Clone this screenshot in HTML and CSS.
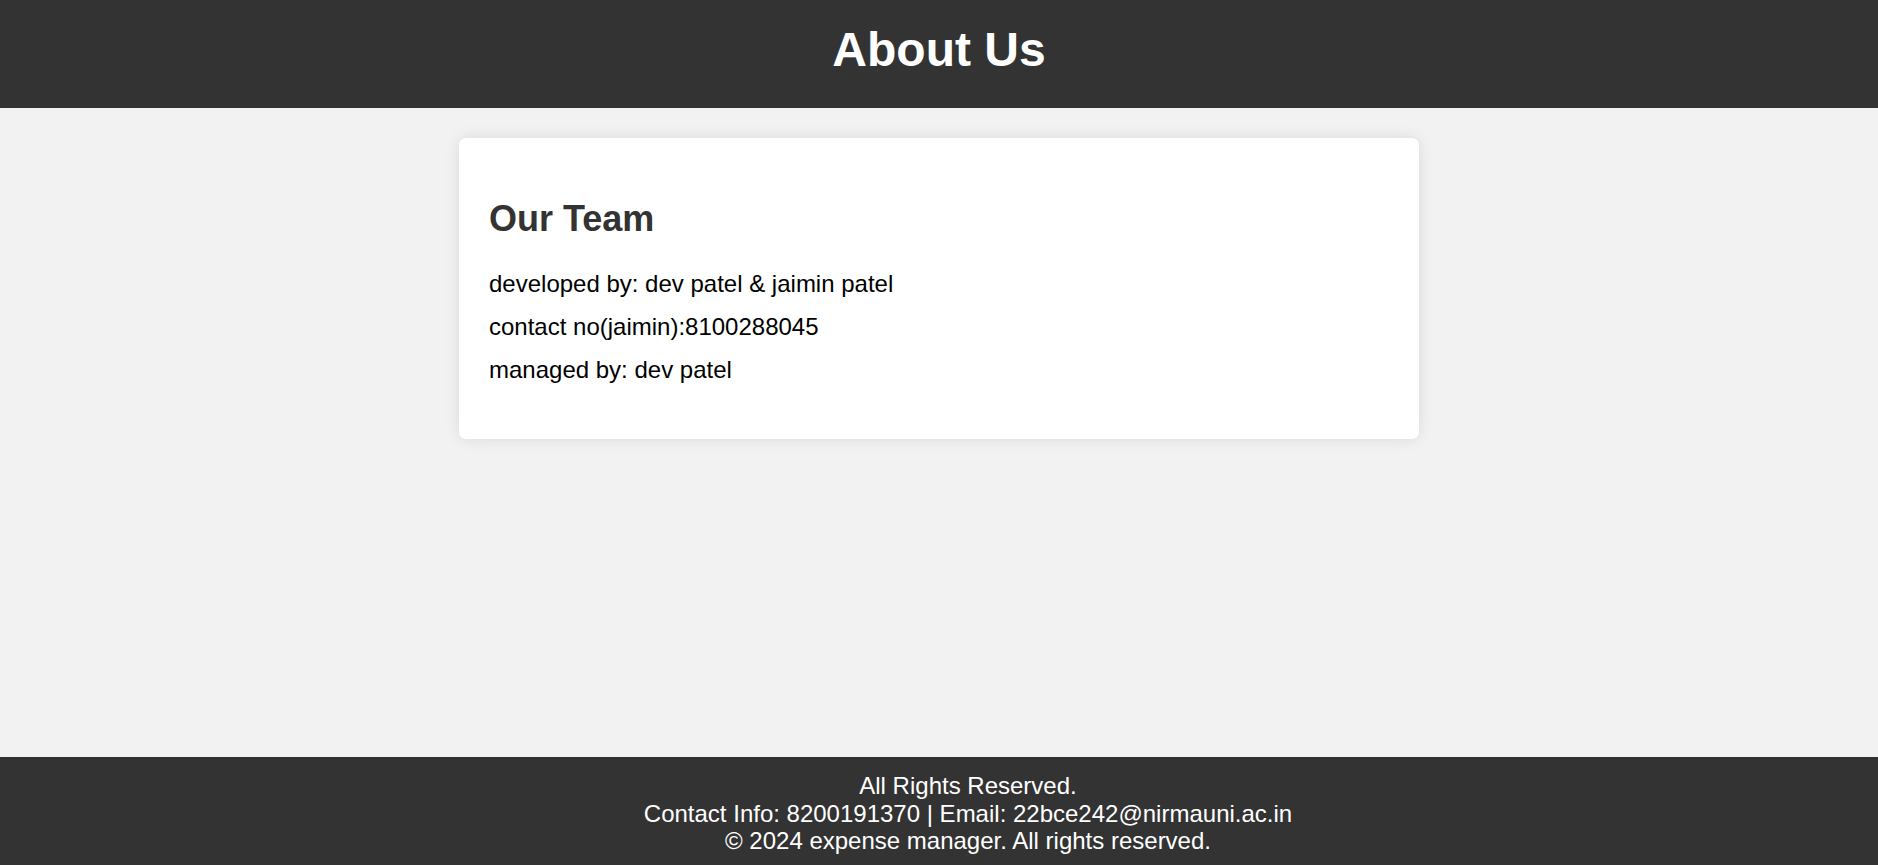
FILE: index.html
```html
<!DOCTYPE html>
<html lang="en">
<head>
<meta charset="UTF-8">
<title>About Us</title>
<link rel="stylesheet" href="styles.css">
</head>
<body>
<header class="site-header">
  <h1 class="site-title">About Us</h1>
</header>
<main class="content">
  <section class="card">
    <h2 class="card-title">Our Team</h2>
    <p class="card-text">developed by: dev patel &amp; jaimin patel</p>
    <p class="card-text">contact no(jaimin):8100288045</p>
    <p class="card-text">managed by: dev patel</p>
  </section>
</main>
<footer class="site-footer">
  <p class="footer-text">All Rights Reserved.<br>Contact Info: 8200191370 | Email: 22bce242@nirmauni.ac.in<br>© 2024 expense manager. All rights reserved.</p>
</footer>
</body>
</html>
```

FILE: styles.css
```css
html, body {
  margin: 0;
  padding: 0;
}

body {
  font-family: "Liberation Sans", Arial, sans-serif;
  background: #f2f2f2;
  min-height: 100vh;
  display: flex;
  flex-direction: column;
}

.site-header {
  background: #333333;
  color: #ffffff;
  text-align: center;
  padding: 22px 0 31px;
}

.site-title {
  margin: 0;
  font-size: 48px;
  font-weight: bold;
  line-height: 55px;
}

.content {
  flex: 1;
  padding-top: 30px;
}

.card {
  width: 960px;
  box-sizing: border-box;
  margin: 0 auto;
  background: #ffffff;
  border-radius: 7px;
  box-shadow: 0 0 15px rgba(0, 0, 0, 0.1);
  padding: 1px 30px 40px;
}

.card-title {
  color: #333333;
  font-size: 36px;
  font-weight: bold;
  margin: 59px 0 30px;
}

.card-text {
  color: #000000;
  font-size: 24px;
  margin: 15px 0;
}

.site-footer {
  background: #333333;
  color: #ffffff;
  text-align: center;
  padding: 15px 0 10px 58px;
}

.footer-text {
  margin: 0;
  font-size: 24px;
  line-height: 27.6px;
}
```
